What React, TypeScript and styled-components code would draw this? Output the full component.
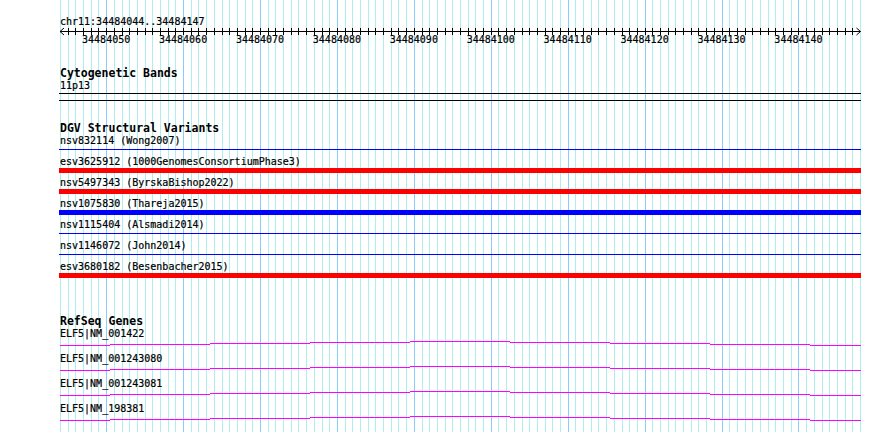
import styled, { createGlobalStyle } from "styled-components";

const GlobalStyle = createGlobalStyle`
  html, body {
    margin: 0;
    padding: 0;
    background: #ffffff;
  }
  body {
    font-family: "DejaVu Sans Mono", "Liberation Mono", monospace;
    color: #000000;
  }
`;

const START = 34484044;
const END = 34484147;
const BASES = END - START + 1;
const VIEW_LEFT = 60;
const VIEW_WIDTH = 800;
const PX = VIEW_WIDTH / BASES;
const TRACK_LEFT = 59;

const baseX = (i: number) => Math.round(VIEW_LEFT + i * PX);

const Page = styled.div`
  position: relative;
  width: 890px;
  height: 432px;
  overflow: hidden;
  background: #ffffff;
`;

const GridLayer = styled.svg`
  position: absolute;
  left: 0;
  top: 0;
  width: 890px;
  height: 432px;
`;

const Tracks = styled.div`
  position: relative;
  margin-left: ${TRACK_LEFT}px;
  width: 802px;
  padding-top: 16px;
  display: flex;
  flex-direction: column;
`;

const Location = styled.div`
  font-size: 10px;
  line-height: 12px;
  padding-left: 1px;
  white-space: nowrap;
  -webkit-text-stroke: 0.2px #000;
`;

const Axis = styled.svg`
  display: block;
  width: 802px;
  height: 6px;
  overflow: visible;
`;

const TickLabels = styled.div`
  display: flex;
  padding-left: ${VIEW_LEFT - TRACK_LEFT + 6 * PX - 5 * PX}px;
  font-size: 10px;
  line-height: 12px;
  -webkit-text-stroke: 0.2px #000;
`;

const TickLabel = styled.div`
  flex: 0 0 ${10 * PX}px;
  text-align: center;
`;

const Section = styled.section<{ $gap: number }>`
  display: flex;
  flex-direction: column;
  margin-top: ${(p) => p.$gap}px;
`;

const TrackTitle = styled.div`
  font-size: 11.5px;
  font-weight: bold;
  line-height: 13px;
  padding-left: 1px;
  white-space: nowrap;
`;

const TrackLabel = styled.div`
  font-size: 10px;
  line-height: 12px;
  padding-left: 1px;
  white-space: nowrap;
  -webkit-text-stroke: 0.2px #000;
`;

const Band = styled.div`
  margin-top: 1px;
  height: 6px;
  border-top: 1px solid #000000;
  border-bottom: 1px solid #000000;
`;

const VariantRow = styled.div`
  display: flex;
  flex-direction: column;
  margin-bottom: 4px;
`;

const FeatureLane = styled.div`
  height: 5px;
  display: flex;
  align-items: center;
`;

const Feature = styled.div<{ $color: string; $thin?: boolean }>`
  width: 100%;
  height: ${(p) => (p.$thin ? 1 : 5)}px;
  background: ${(p) => p.$color};
`;

const GeneRow = styled.div`
  display: flex;
  flex-direction: column;
  margin-bottom: 6px;
`;

const GeneGlyph = styled.svg`
  display: block;
  width: 802px;
  height: 7px;
`;

type Variant = { id: string; study: string; color: string; thin?: boolean };

const variants: Variant[] = [
  { id: "nsv832114", study: "Wong2007", color: "#0000ff", thin: true },
  { id: "esv3625912", study: "1000GenomesConsortiumPhase3", color: "#ff0000" },
  { id: "nsv5497343", study: "ByrskaBishop2022", color: "#ff0000" },
  { id: "nsv1075830", study: "Thareja2015", color: "#0000ff" },
  { id: "nsv1115404", study: "Alsmadi2014", color: "#0000ff", thin: true },
  { id: "nsv1146072", study: "John2014", color: "#0000ff", thin: true },
  { id: "esv3680182", study: "Besenbacher2015", color: "#ff0000" },
];

const genes = ["ELF5|NM_001422", "ELF5|NM_001243080", "ELF5|NM_001243081", "ELF5|NM_198381"];

// intron hat: stepped line, page x ranges and their depth (0 = top of glyph)
const intronSteps: [number, number, number][] = [
  [60, 110, 5],
  [110, 210, 4],
  [210, 310, 3],
  [310, 410, 2],
  [410, 510, 1],
  [510, 610, 2],
  [610, 710, 3],
  [710, 810, 4],
  [810, 861, 5],
];

function Grid() {
  const lines = [];
  for (let i = 0; i <= BASES; i++) {
    const major = (START + i) % 10 === 0;
    const x = baseX(i) + 0.5;
    lines.push(
      <line
        key={i}
        x1={x}
        x2={x}
        y1={0}
        y2={432}
        stroke={major ? "#87cefa" : "#afeeee"}
        strokeWidth={1}
      />
    );
  }
  return <GridLayer shapeRendering="crispEdges">{lines}</GridLayer>;
}

function Ruler() {
  const ticks = [];
  for (let i = 1; i < BASES; i++) {
    const x = baseX(i) - TRACK_LEFT + 0.5;
    ticks.push(<line key={i} x1={x} x2={x} y1={0} y2={7} stroke="#000" strokeWidth={1} />);
  }
  const left = VIEW_LEFT - TRACK_LEFT;
  const right = baseX(BASES) - TRACK_LEFT + 0.5;
  const labels = [];
  for (let p = 34484050; p <= END; p += 10) labels.push(p);
  return (
    <>
      <Location>chr11:34484044..34484147</Location>
      <Axis>
        <line x1={left} x2={right} y1={3.5} y2={3.5} stroke="#000" strokeWidth={1} />
        {ticks}
        <polyline points={`${left + 4},0 ${left},3.5 ${left + 4},7`} fill="none" stroke="#000" strokeWidth={1} />
        <polyline points={`${right - 4},0 ${right},3.5 ${right - 4},7`} fill="none" stroke="#000" strokeWidth={1} />
      </Axis>
      <TickLabels>
        {labels.map((p) => (
          <TickLabel key={p}>{p}</TickLabel>
        ))}
      </TickLabels>
    </>
  );
}

function Intron() {
  return (
    <GeneGlyph shapeRendering="crispEdges">
      {intronSteps.map(([a, b, y]) => (
        <line
          key={a}
          x1={a - TRACK_LEFT}
          x2={b - TRACK_LEFT}
          y1={y + 0.5}
          y2={y + 0.5}
          stroke="#ff00ff"
          strokeWidth={1}
        />
      ))}
    </GeneGlyph>
  );
}

export default function App() {
  return (
    <Page>
      <GlobalStyle />
      <Grid />
      <Tracks>
        <Ruler />

        <Section $gap={21}>
          <TrackTitle>Cytogenetic Bands</TrackTitle>
          <TrackLabel>11p13</TrackLabel>
          <Band />
        </Section>

        <Section $gap={21}>
          <TrackTitle>DGV Structural Variants</TrackTitle>
          {variants.map((v) => (
            <VariantRow key={v.id}>
              <TrackLabel>
                {v.id} ({v.study})
              </TrackLabel>
              <FeatureLane>
                <Feature $color={v.color} $thin={v.thin} />
              </FeatureLane>
            </VariantRow>
          ))}
        </Section>

        <Section $gap={33}>
          <TrackTitle>RefSeq Genes</TrackTitle>
          {genes.map((g) => (
            <GeneRow key={g}>
              <TrackLabel>{g}</TrackLabel>
              <Intron />
            </GeneRow>
          ))}
        </Section>
      </Tracks>
    </Page>
  );
}
